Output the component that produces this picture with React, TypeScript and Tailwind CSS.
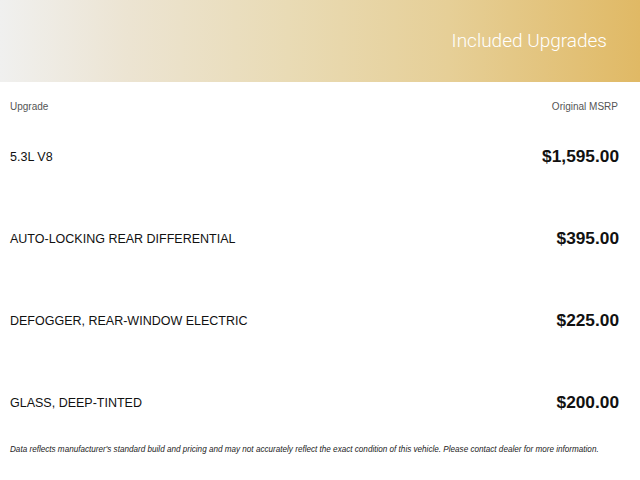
import React from "react";

const rows = [
  { name: "5.3L V8", price: "$1,595.00" },
  { name: "AUTO-LOCKING REAR DIFFERENTIAL", price: "$395.00" },
  { name: "DEFOGGER, REAR-WINDOW ELECTRIC", price: "$225.00" },
  { name: "GLASS, DEEP-TINTED", price: "$200.00" },
];

export default function App() {
  return (
    <div className="w-[640px] h-[480px] bg-white overflow-hidden" style={{ fontFamily: '"Liberation Sans", Arial, sans-serif' }}>
      <div className="h-[82px] flex items-center justify-end pr-[33px] bg-[linear-gradient(to_right,#f0f0ef_0%,#ece4d2_20%,#e9dbb5_45%,#e6cf97_70%,#e0b965_100%)]">
        <span className="text-white text-[19px] font-light" style={{ fontFamily: 'Roboto, sans-serif' }}>Included Upgrades</span>
      </div>
      <div className="h-[34px] flex justify-between items-start pt-[19px] pl-[10px] pr-[22px] text-[10px] leading-[12px] text-[#555]">
        <span>Upgrade</span>
        <span>Original MSRP</span>
      </div>
      {rows.map((r) => (
        <div key={r.name} className="h-[82px] flex items-center justify-between pl-[10px] pr-[21px]">
          <span className="text-[12.5px] text-[#111]">{r.name}</span>
          <span className="text-[17.3px] font-bold text-[#111]">{r.price}</span>
        </div>
      ))}
      <div className="pt-[1px] pl-[10px] text-[8.15px] leading-[10px] italic text-[#222]">
        Data reflects manufacturer's standard build and pricing and may not accurately reflect the exact condition of this vehicle. Please contact dealer for more information.
      </div>
    </div>
  );
}
